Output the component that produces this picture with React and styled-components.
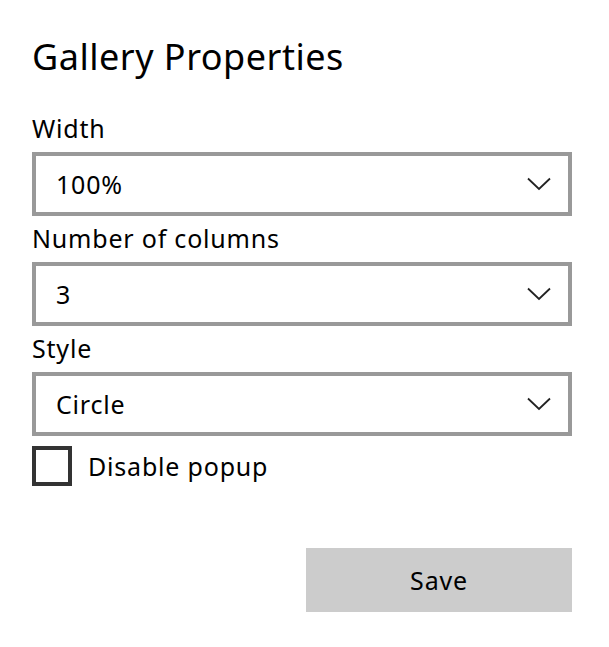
import React from "react";
import styled, { createGlobalStyle } from "styled-components";

const GlobalStyle = createGlobalStyle`
  body {
    margin: 0;
    background: #fff;
    font-family: "Noto Sans", "Open Sans", sans-serif;
    color: #000;
  }
`;

const Panel = styled.div`
  width: 540px;
  padding: 34px 0 0 32px;
  display: flex;
  flex-direction: column;
`;

const Title = styled.h1`
  margin: 0 0 32px 0;
  font-size: 36px;
  line-height: 46px;
  font-weight: 400;
  letter-spacing: 0.5px;
`;

const Field = styled.div`
  display: flex;
  flex-direction: column;
  margin-bottom: 6px;
`;

const Label = styled.div`
  font-size: 25px;
  line-height: 32px;
  letter-spacing: 0.8px;
  margin-bottom: 8px;
`;

const Select = styled.div`
  box-sizing: border-box;
  height: 64px;
  border: 4px solid #999;
  display: flex;
  align-items: center;
  justify-content: space-between;
  padding: 0 17px 0 20px;
  font-size: 25px;
  letter-spacing: 0.8px;
`;

const Chevron = () => (
  <svg width="24" height="14" viewBox="0 0 24 14">
    <path d="M1 1.5 L12 12 L23 1.5" fill="none" stroke="#222" strokeWidth="1.8" />
  </svg>
);

const CheckRow = styled.label`
  display: flex;
  align-items: center;
  gap: 16px;
  margin-top: 4px;
  font-size: 25px;
  letter-spacing: 0.8px;
`;

const Box = styled.span`
  box-sizing: border-box;
  width: 40px;
  height: 40px;
  border: 4px solid #333;
`;

const Footer = styled.div`
  display: flex;
  justify-content: flex-end;
  margin-top: 62px;
`;

const SaveButton = styled.button`
  width: 266px;
  height: 64px;
  border: none;
  background: #ccc;
  font-family: inherit;
  font-size: 25px;
  letter-spacing: 0.8px;
  color: #000;
`;

const fields = [
  { label: "Width", value: "100%" },
  { label: "Number of columns", value: "3" },
  { label: "Style", value: "Circle" },
];

export default function App() {
  return (
    <>
      <GlobalStyle />
      <Panel>
        <Title>Gallery Properties</Title>
        {fields.map((f) => (
          <Field key={f.label}>
            <Label>{f.label}</Label>
            <Select>
              <span>{f.value}</span>
              <Chevron />
            </Select>
          </Field>
        ))}
        <CheckRow>
          <Box />
          Disable popup
        </CheckRow>
        <Footer>
          <SaveButton>Save</SaveButton>
        </Footer>
      </Panel>
    </>
  );
}
